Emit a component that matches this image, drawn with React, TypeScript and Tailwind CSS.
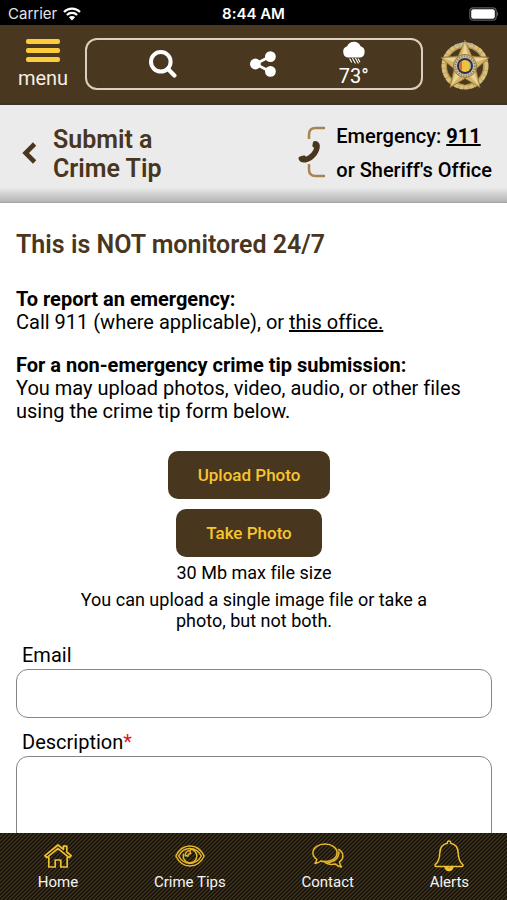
import type { ReactNode } from "react";

function WifiIcon() {
  return (
    <svg width="18" height="14" viewBox="0 0 18 14" fill="none" aria-hidden="true">
      <path d="M1 5a11.3 11.3 0 0 1 16 0" stroke="#fff" strokeWidth="2.2" />
      <path d="M3.9 8a7.2 7.2 0 0 1 10.2 0" stroke="#fff" strokeWidth="2.2" />
      <path d="M9 13.4 5.9 10.3a4.4 4.4 0 0 1 6.2 0Z" fill="#fff" />
    </svg>
  );
}

function BatteryIcon() {
  return (
    <svg width="30" height="14" viewBox="0 0 30 14" fill="none" aria-hidden="true">
      <rect x="0.8" y="0.8" width="26.4" height="12.4" rx="3.5" stroke="#5c5c5c" strokeWidth="1.2" />
      <rect x="2.2" y="2.2" width="23.6" height="9.6" rx="2" fill="#fff" />
      <path d="M28.2 4.6q2 2.4 0 4.8Z" fill="#777" />
    </svg>
  );
}

function SearchIcon() {
  return (
    <svg width="28" height="28" viewBox="0 0 28 28" fill="none" aria-hidden="true">
      <circle cx="11.8" cy="11.8" r="9.8" stroke="#fff" strokeWidth="4" />
      <path d="m19 19 6.4 6.4" stroke="#fff" strokeWidth="4.2" strokeLinecap="round" />
    </svg>
  );
}

function ShareIcon() {
  return (
    <svg width="26" height="26" viewBox="0 0 26 26" aria-hidden="true">
      <path d="M20 5.5 5.5 13 20 20.5" fill="none" stroke="#fff" strokeWidth="2.6" />
      <circle cx="5.4" cy="13" r="5.4" fill="#fff" />
      <circle cx="20.4" cy="5.6" r="5.4" fill="#fff" />
      <circle cx="20.4" cy="20.4" r="5.4" fill="#fff" />
    </svg>
  );
}

function RainIcon() {
  return (
    <svg width="24" height="23" viewBox="0 0 24 23" fill="none" aria-hidden="true">
      <path
        d="M6.6 16.6A5.8 5.8 0 0 1 5.2 5.3 7.2 7.2 0 0 1 18.6 5.3 5.8 5.8 0 0 1 17.4 16.6Z"
        fill="#fff"
      />
      <path
        d="m7.6 17.6 2.2 4M10.4 17l3 5.4M13.4 17l3 5.4M16 17.6l2 3.6"
        stroke="#fff"
        strokeWidth="1.1"
      />
    </svg>
  );
}

function SheriffBadge() {
  return (
    <svg width="52" height="52" viewBox="0 0 52 52" aria-label="Sheriff's star">
      <circle cx="26" cy="28" r="20.5" fill="none" stroke="#b39450" strokeWidth="5" />
      <circle
        cx="26"
        cy="28"
        r="21.5"
        fill="none"
        stroke="#d8bf7c"
        strokeWidth="4"
        strokeDasharray="4.4 0.6"
      />
      <path
        d="m26 2 6.8 16 17.4 1.5L37 31l4 18.500L26 40.500l-15 9L15 31 1.800 19.500 19.200 18Z"
        fill="#d3b367"
        stroke="#8d6c2d"
        strokeWidth="0.8"
      />
      <path
        d="m26 4 3 14-3 10-3-10ZM48 20 35 25l-9 3 7-8ZM40 48l-9-10-5-10 9 6ZM12 48l5-14 9-6-5 10ZM4 20l15 0 7 8-9-3Z"
        fill="#ead594"
      />
      <path d="M17 7.5q9-4 18 0" fill="none" stroke="#b5b0a6" strokeWidth="2.6" strokeDasharray="2 1" />
      <circle cx="26" cy="28" r="11.5" fill="#d8c693" stroke="#8e7747" strokeWidth="1" />
      <circle cx="26" cy="28" r="9.7" fill="none" stroke="#8a8272" strokeWidth="2" strokeDasharray="1.4 1.2" />
      <circle cx="26" cy="28" r="8" fill="#27314f" />
      <circle cx="26" cy="28" r="6" fill="#efc23e" />
      <path d="M20 28a6 6 0 0 1 3-5.200v10.400A6 6 0 0 1 20 28Z" fill="#d0674a" />
      <path d="M30.600 24.200a6 6 0 0 1 0 7.600Z" fill="#8fa6a8" />
      <path d="m22.6 45.5 3.4-2 3.4 2-3.4 1.6Z" fill="#4a3a1c" />
    </svg>
  );
}

function PhoneIcon() {
  return (
    <svg width="28" height="54" viewBox="0 0 28 54" fill="none" aria-hidden="true">
      <path
        d="M11 13V8.6Q11 2 17.6 2H27M11 38v5.4Q11 50 17.6 50H27"
        stroke="#a8844f"
        strokeWidth="2.5"
      />
      <path
        d="M16.2 15.2c2-.6 4 .2 5 2.4 2.6 5.2-3.4 17.2-13.6 18.8-3.4.6-6.2-.6-7-3.4-.3-1.2.2-2 1.3-2.4l3.6-1.1c1-.3 1.8 0 2.6 1.2 4-1.6 7-5.2 8.1-8.9-1.5-.6-2-1.2-1.8-2.2l.6-3.4c.1-.6.5-.9 1.2-1Z"
        fill="#49361e"
      />
    </svg>
  );
}

function HomeIcon() {
  return (
    <svg width="28" height="24" viewBox="0 0 28 24" fill="none" stroke="#f0c12f" strokeWidth="1.7" strokeLinejoin="round" aria-hidden="true">
      <path d="M14 1 .9 11.6l1.8 2L14 4.6l11.3 9 1.8-2-4.3-3.6V2.2h-3.4v3.2Z" />
      <path d="M4.8 12.6V23h6.4v-7h5.6v7h6.4V12.6" />
    </svg>
  );
}

function EyeIcon() {
  return (
    <svg width="30" height="22" viewBox="0 0 30 22" fill="none" stroke="#e5b72c" strokeWidth="1.5" aria-hidden="true">
      <path d="M.8 11C4 4.4 9 1 15 1s11 3.4 14.2 10C26 17.6 21 21 15 21S4 17.6.8 11Z" />
      <path d="M3.6 11C6.4 6 10.4 3.6 15 3.6S23.6 6 26.4 11C23.6 16 19.6 18.4 15 18.4S6.4 16 3.6 11Z" />
      <path d="M15 4.2a6.8 6.8 0 1 1-6.4 4.6" />
      <path d="M10.2 10.6A5 5 0 0 1 15 5.6l.6 3a3 3 0 0 0-2.8 2.6Z" />
    </svg>
  );
}

function ChatIcon() {
  return (
    <svg width="32" height="26" viewBox="0 0 32 26" fill="none" stroke="#e5b72c" strokeWidth="1.5" strokeLinejoin="round" aria-hidden="true">
      <path d="M13 1C6.2 1 .9 4.8.9 9.8c0 2.7 1.5 5 3.9 6.6-.2 1.6-.9 2.9-1.8 4 2.4-.2 4.3-1 5.8-2.4 1.3.3 2.7.5 4.2.5 6.8 0 12.1-3.8 12.1-8.7S19.8 1 13 1Z" />
      <path d="M25.8 6.2c3 1.2 5.1 3.7 5.1 6.7 0 2.4-1.3 4.6-3.4 6 .2 2 .9 3.8 2 5.1-2.6-.3-4.6-1.3-6-3-4.2.9-8.4.3-11-1.8" />
      <path d="M26.8 8.4c.8 6-4.4 10.8-11.6 11.2" />
    </svg>
  );
}

function BellIcon() {
  return (
    <svg width="30" height="32" viewBox="0 0 30 32" fill="none" stroke="#f0c12f" strokeWidth="1.5" strokeLinejoin="round" aria-hidden="true">
      <path d="M13.4 3.2a1.7 1.7 0 1 1 3.2 0c4.9.9 7.4 4.6 7.6 9.6.2 6.2 1.3 9.4 4.6 11.8.5 1.2 0 1.8-1.2 1.8H2.4c-1.2 0-1.7-.6-1.2-1.8 3.3-2.4 4.4-5.6 4.6-11.8.2-5 2.7-8.7 7.6-9.6Z" />
      <path d="M11 26.6a4 4 0 0 0 8 0l-3.6 1.8Z" fill="#f0c12f" />
    </svg>
  );
}

function NavItem({ label, icon }: { label: string; icon: ReactNode }) {
  return (
    <a href="#" className="flex flex-col items-center text-[15px] leading-5 text-zinc-100">
      <span className="flex h-8 items-center">{icon}</span>
      {label}
    </a>
  );
}

export default function App() {
  return (
    <div className="flex h-screen flex-col overflow-hidden bg-white font-[Roboto,sans-serif] text-black [font-variant-ligatures:none]">
      <div className="grid h-[25px] shrink-0 grid-cols-3 items-center bg-black px-2 pt-0.5 text-[15px] leading-5 text-white">
        <div className="flex items-center gap-1.5 font-[Inter,sans-serif] text-zinc-200">
          Carrier
          <WifiIcon />
        </div>
        <div className="text-center font-[Inter,sans-serif] font-semibold">8:44 AM</div>
        <div className="flex justify-end">
          <BatteryIcon />
        </div>
      </div>

      <header className="flex h-20 shrink-0 items-center border-b-2 border-[#3a3528] bg-[#493720] pr-4 pl-[18px]">
        <button type="button" className="flex w-[50px] flex-col items-center text-xl leading-6 text-[#f6eee2]">
          <span className="mb-1 flex w-[34px] flex-col gap-1">
            <span className="h-[5px] rounded-xs bg-[#fbcd3c]" />
            <span className="h-[5px] rounded-xs bg-[#fbcd3c]" />
            <span className="h-[5px] rounded-xs bg-[#fbcd3c]" />
          </span>
          menu
        </button>
        <div className="mr-4 ml-[17px] grid h-[52px] flex-1 grid-cols-[104fr_94fr_86fr] items-center justify-items-center rounded-xl border-2 border-[#dccfbf] px-6">
          <button type="button" aria-label="Search">
            <SearchIcon />
          </button>
          <button type="button" aria-label="Share">
            <ShareIcon />
          </button>
          <button type="button" className="flex flex-col items-center text-xl leading-6 text-white">
            <RainIcon />
            73°
          </button>
        </div>
        <SheriffBadge />
      </header>

      <section className="flex h-[98px] shrink-0 items-center border-b border-[#a3a3a3] bg-linear-to-b from-[#ebebeb] from-85% to-[#b4b4b4] pr-[15px] pb-0.5 pl-[22px]">
        <button type="button" aria-label="Back" className="mr-4 flex">
          <svg width="15" height="22" viewBox="0 0 15 22" fill="none" aria-hidden="true">
            <path d="M12.6 2 3.6 11l9 9" stroke="#49361e" strokeWidth="4.6" />
          </svg>
        </button>
        <h1 className="w-[130px] pt-0.5 text-[25px] leading-[29px] font-semibold text-[#49361e]">
          Submit a Crime Tip
        </h1>
        <div className="ml-auto flex items-center gap-2.5">
          <PhoneIcon />
          <p className="text-xl leading-[34px] font-medium">
            Emergency:{" "}
            <a href="tel:911" className="font-bold underline">
              911
            </a>
            <br />
            or Sheriff's Office
          </p>
        </div>
      </section>

      <main className="min-h-0 flex-1 overflow-hidden pt-[27px] pr-[15px] pl-4">
        <h2 className="text-[25px] leading-[29px] font-semibold text-[#49361e]">
          This is NOT monitored 24/7
        </h2>
        <div className="mt-[29px] space-y-5 text-xl leading-[23px]">
          <p>
            <strong>To report an emergency:</strong>
            <br />
            Call 911 (where applicable), or{" "}
            <a href="#" className="underline">
              this office.
            </a>
          </p>
          <p>
            <strong>For a non-emergency crime tip submission:</strong>
            <br />
            You may upload photos, video, audio, or other files using the crime tip form below.
          </p>
        </div>

        <form>
          <div className="mt-7 flex flex-col items-center text-center text-lg">
            <div className="mr-2.5 flex flex-col items-center gap-2.5 text-[17px] leading-5 font-medium text-[#f7c530]">
              <button type="button" className="h-12 rounded-[10px] bg-[#49361e] px-[30px]">
                Upload Photo
              </button>
              <button type="button" className="h-12 rounded-[10px] bg-[#49361e] px-[30px]">
                Take Photo
              </button>
            </div>
            <p className="mt-1.5 leading-5">30 Mb max file size</p>
            <p className="mt-1.5 max-w-[360px] leading-[21px]">
              You can upload a single image file or take a photo, but not both.
            </p>
          </div>

          <label htmlFor="email" className="mt-3 block pl-1.5 text-xl leading-6">
            Email
          </label>
          <input
            id="email"
            type="email"
            className="mt-0.5 block h-[49px] w-full rounded-xl border border-[#858585] px-3 text-xl"
          />
          <label htmlFor="description" className="mt-3 block pl-1.5 text-xl leading-6">
            Description<span className="text-[#e3131b]">*</span>
          </label>
          <textarea
            id="description"
            className="mt-0.5 block h-[150px] w-full resize-none rounded-xl border border-[#858585] px-3 py-2 text-xl"
          />
        </form>
      </main>

      <nav className="flex h-[67px] shrink-0 justify-around bg-[linear-gradient(135deg,#423620_6%,#100c06_20%_30%,#423620_44%_56%,#100c06_70%_80%,#423620_94%)] bg-size-[4px_4px] pt-[7px]">
        <NavItem label="Home" icon={<HomeIcon />} />
        <NavItem label="Crime Tips" icon={<EyeIcon />} />
        <NavItem label="Contact" icon={<ChatIcon />} />
        <NavItem label="Alerts" icon={<BellIcon />} />
      </nav>
    </div>
  );
}
